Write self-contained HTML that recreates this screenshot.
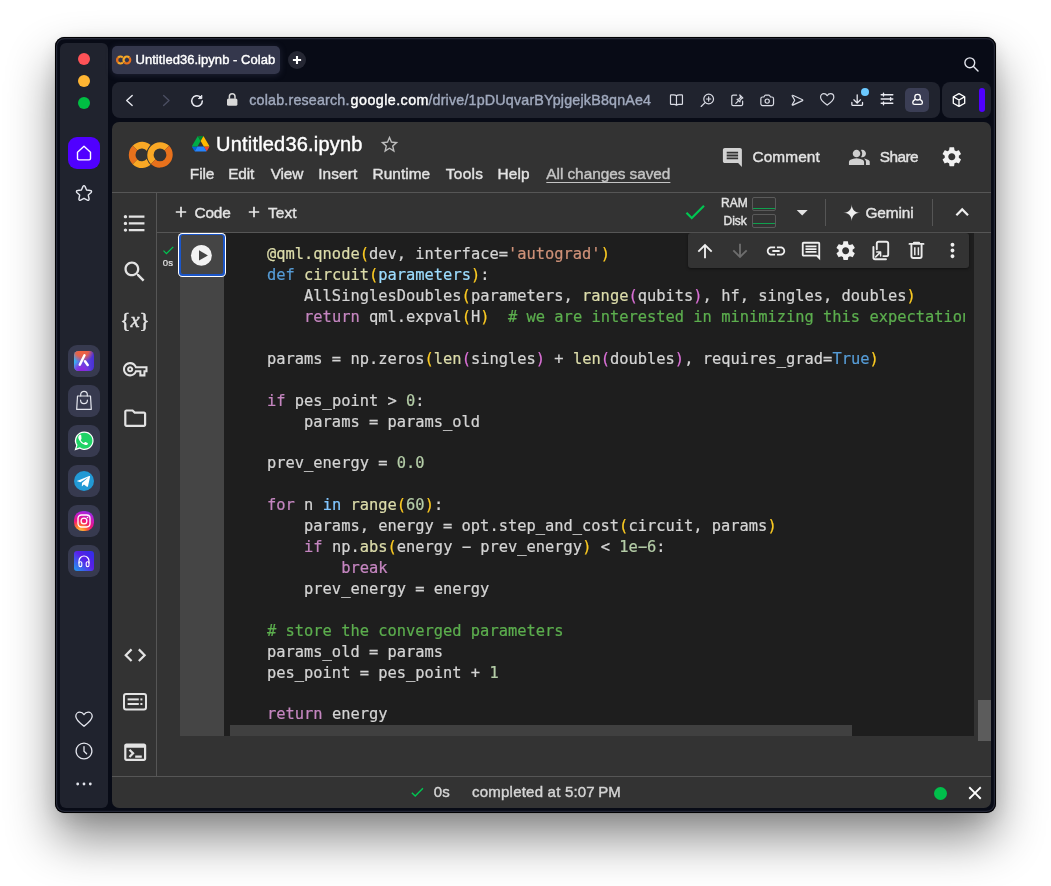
<!DOCTYPE html>
<html><head><meta charset="utf-8"><title>Untitled36.ipynb - Colab</title>
<style>
*{box-sizing:border-box;margin:0;padding:0}
html,body{width:1051px;height:886px;overflow:hidden;background:#fff}
body{position:relative;font-family:"Liberation Sans",sans-serif}
#root{position:absolute;left:0;top:0;width:1051px;height:886px;will-change:transform}
.a{position:absolute}
.t{position:absolute;white-space:pre;line-height:1;-webkit-text-stroke:.4px}
#win{left:55px;top:37px;width:941px;height:775.5px;border-radius:9.5px;background:#080b16;
 box-shadow:inset 0 0 0 1px #010103,inset 0 0 0 2.200px rgba(150,155,185,.200),0 0 1px rgba(0,0,0,.5),0 26px 48px rgba(0,0,0,.45),0 6px 20px rgba(0,0,0,.1)}
#side{left:60px;top:42.500px;width:48px;height:765.500px;border-radius:6px;background:#20232e}
.dot{width:12px;height:12px;border-radius:50%;left:78px}
.app{left:68px;width:32px;height:32px;border-radius:9px;background:#373a4f}
#tab{left:112px;top:46px;width:168px;height:27.500px;border-radius:5px;background:#34374c;box-shadow:0 1px 6px rgba(70,74,105,.380)}
#url{left:112px;top:82px;width:828px;height:36px;border-radius:8px;background:#20232e}
#ext{left:942px;top:82px;width:49px;height:36px;border-radius:8px;background:#20232e}
#page{left:112px;top:122px;width:879px;height:686px;border-radius:7px;background:#333}
svg{position:absolute;overflow:visible}
.ln{height:20.909px;line-height:20.909px;font-family:"DejaVu Sans Mono","Liberation Mono",monospace;font-size:15.4px;white-space:pre;color:#d4d4d4;-webkit-text-stroke:.22px}
.f{color:#dcdcaa}.g{color:#fccb22}.m{color:#da70d6}.d{color:#d4d4d4}.s{color:#ce9178}.k{color:#569cd6}.p{color:#9cdcfe}.c{color:#c586c0}.cm{color:#5cae4e}.i{color:#82c6ff}.n{color:#b5cea8}
</style></head><body><div id="root">
<div id="win" class="a"></div>
<div id="side" class="a"></div>
<div class="a dot" style="top:53px;background:#fe5257"></div>
<div class="a dot" style="top:75px;background:#feb533"></div>
<div class="a dot" style="top:97px;background:#00bf43"></div>
<div id="tab" class="a"></div>
<div id="url" class="a"></div>
<div id="ext" class="a"></div>
<div id="page" class="a"></div>
<!-- browser sidebar -->
<div class="a" style="left:68px;top:137px;width:32px;height:32px;border-radius:9px;background:#5000ff"></div>
<svg style="left:74px;top:143px" width="20" height="20" viewBox="0 0 20 20" fill="none" stroke="#fff" stroke-width="1.4" stroke-linejoin="round"><path d="M3.5 9.2 10 3.2l6.5 6v6.3a1.4 1.4 0 0 1-1.4 1.4H4.9a1.4 1.4 0 0 1-1.4-1.4z"/></svg>
<svg style="left:74px;top:183px" width="20" height="20" viewBox="0 0 20 20" fill="none" stroke="#e4e6ee" stroke-width="1.4" stroke-linejoin="round"><path d="M10 2.6c.5 0 .8.3 1 .8l1.6 3.6 3.9.5c1 .1 1.400 1.200.7 1.900l-2.900 2.700.8 3.900c.2 1-.8 1.700-1.700 1.200L10 15.300l-3.400 1.900c-.9.5-1.900-.2-1.700-1.200l.8-3.900-2.900-2.700c-.7-.7-.3-1.800.7-1.900L7.400 7 9 3.400c.2-.5.500-.8 1-.8z"/></svg>
<div class="a app" style="top:345px"></div>
<div class="a app" style="top:385px"></div>
<div class="a app" style="top:425px"></div>
<div class="a app" style="top:465px"></div>
<div class="a app" style="top:505px"></div>
<div class="a app" style="top:545px"></div>
<!-- app 1: aria -->
<svg style="left:74px;top:351px" width="20" height="20" viewBox="0 0 20 20"><defs><linearGradient id="ga" x1="0" y1="0.500" x2="1" y2="0.500"><stop offset="0" stop-color="#38b8f0"/><stop offset=".38" stop-color="#6257e4"/><stop offset="1" stop-color="#4a2fd4"/></linearGradient><radialGradient id="gb" cx=".4" cy="-.05" r=".62"><stop offset="0" stop-color="#f6643a"/><stop offset=".55" stop-color="#f0603e" stop-opacity=".9"/><stop offset="1" stop-color="#e85a60" stop-opacity="0"/></radialGradient><radialGradient id="gc" cx=".35" cy="1.050" r=".55"><stop offset="0" stop-color="#8f22da"/><stop offset=".5" stop-color="#8a2be0" stop-opacity=".8"/><stop offset="1" stop-color="#8a2be0" stop-opacity="0"/></radialGradient></defs><rect width="20" height="20" rx="4.500" fill="url(#ga)"/><rect width="20" height="20" rx="4.500" fill="url(#gc)"/><rect width="20" height="20" rx="4.500" fill="url(#gb)"/><path d="M10.500 4.300 5.800 13.700" stroke="#fff" stroke-width="2.500" stroke-linecap="round"/><path d="M11 10.300 13.700 14" stroke="#fff" stroke-width="2.500" stroke-linecap="round"/></svg>
<!-- app 2: bag -->
<svg style="left:74px;top:391px" width="20" height="20" viewBox="0 0 20 20" fill="none" stroke="#e4e6ee" stroke-width="1.200" stroke-linejoin="round" stroke-linecap="round"><path d="M3.500 5h13l.8 13.400H2.700z"/><path d="M6.700 5V3.600a3.300 3.300 0 0 1 6.600 0V5"/><path d="M6.600 9.200a3.400 3.400 0 0 0 6.800 0"/></svg>
<!-- app 3: whatsapp -->
<svg style="left:73px;top:430px" width="22" height="22" viewBox="0 0 22 22"><path d="M11.200 1.400a9.300 9.300 0 0 0-8 14l-1.700 5 5.200-1.600a9.300 9.300 0 1 0 4.500-17.400z" fill="#fff"/><path d="M11.200 2.700a8 8 0 0 0-6.700 12.400l-1.100 3.300 3.500-1.100a8 8 0 1 0 4.300-14.600z" fill="#1fd366"/><path d="M8.100 6.300c-.3-.6-.5-.6-.8-.6h-.7c-.2 0-.6.100-.9.500-.3.300-1.200 1.100-1.200 2.800s1.200 3.200 1.400 3.500c.2.200 2.300 3.700 5.800 5 2.900 1.100 3.400.7 4-.1.600-.7.600-1.400.4-1.500-.2-.3-.4-.4-.9-.6l-2-.9c-.3-.1-.6-.2-.8.200l-.8 1c-.2.200-.300.300-.600.100-1.600-.7-2.800-1.900-3.600-3.300-.2-.3 0-.500.100-.600l.6-.7c.2-.2.200-.4.300-.6.100-.200 0-.400 0-.600z" fill="#fff" transform="translate(1.600 .2) scale(.82)"/></svg>
<!-- app 4: telegram -->
<svg style="left:74px;top:471px" width="20" height="20" viewBox="0 0 20 20"><circle cx="10" cy="10" r="10" fill="#2299d5"/><path d="M3.600 9.700 15.200 5c.5-.2 1 .1.800.9l-2 9.300c-.1.700-.5.800-1.100.5l-3-2.200-1.500 1.400c-.2.200-.3.300-.6.300l.2-3.100 5.600-5c.2-.2-.1-.3-.4-.200L6.300 11.200l-2.900-.900c-.6-.2-.6-.6.200-.600z" fill="#fff"/></svg>
<!-- app 5: instagram -->
<svg style="left:74px;top:511px" width="20" height="20" viewBox="0 0 20 20"><defs><radialGradient id="gi" cx=".3" cy="1.050" r="1.200"><stop offset="0" stop-color="#ffd44f"/><stop offset=".25" stop-color="#ff7a2a"/><stop offset=".5" stop-color="#f0147a"/><stop offset=".8" stop-color="#b71fd4"/><stop offset="1" stop-color="#6a3be0"/></radialGradient></defs><rect width="20" height="20" rx="8.800" fill="url(#gi)"/><rect x="4" y="4" width="12" height="12" rx="3.400" fill="none" stroke="#fff" stroke-width="1.300"/><circle cx="10" cy="10" r="2.900" fill="none" stroke="#fff" stroke-width="1.300"/><circle cx="13.500" cy="6.500" r=".8" fill="#fff"/></svg>
<!-- app 6: player -->
<svg style="left:74px;top:551px" width="20" height="20" viewBox="0 0 20 20"><defs><linearGradient id="gp" x1="1" y1="0" x2="0" y2="1"><stop offset="0" stop-color="#2b30e8"/><stop offset=".45" stop-color="#5a1fe8"/><stop offset="1" stop-color="#1fa0f0"/></linearGradient></defs><rect width="20" height="20" rx="3" fill="url(#gp)"/><path d="M5 12.500V10a5 5 0 0 1 10 0v2.500" fill="none" stroke="#fff" stroke-width="1.200"/><rect x="5" y="10.800" width="2.800" height="4.800" rx="1.300" fill="none" stroke="#fff" stroke-width="1.100"/><rect x="12.200" y="10.800" width="2.800" height="4.800" rx="1.300" fill="none" stroke="#fff" stroke-width="1.100"/></svg>
<!-- heart / clock / dots -->
<svg style="left:74px;top:709.300px" width="20" height="20" viewBox="0 0 20 20" fill="none" stroke="#e4e6ee" stroke-width="1.300" stroke-linejoin="round"><path d="M10 17.200C6 14.200 1.800 11.200 1.800 7.300 1.800 5 3.600 3.200 5.800 3.200c1.700 0 3.200.9 4.200 2.400 1-1.500 2.500-2.400 4.200-2.400 2.200 0 4 1.800 4 4.100 0 3.900-4.200 6.900-8.200 9.900z"/></svg>
<svg style="left:73.800px;top:741.400px" width="20" height="20" viewBox="0 0 20 20" fill="none" stroke="#e4e6ee" stroke-width="1.300" stroke-linecap="round"><circle cx="10" cy="10" r="7.900"/><path d="M10 5.600v4.600l2.600 2.600"/></svg>
<svg style="left:74px;top:774px" width="20" height="20" viewBox="0 0 20 20" fill="#e4e6ee"><circle cx="3.700" cy="10" r="1.400"/><circle cx="10" cy="10" r="1.400"/><circle cx="16.300" cy="10" r="1.400"/></svg>
<!-- tab plus / search -->
<div class="a" style="left:288px;top:51px;width:18px;height:18px;border-radius:50%;background:#252733"></div>
<svg style="left:292px;top:55px" width="10" height="10" viewBox="0 0 10 10" stroke="#fff" stroke-width="2.100"><path d="M5 .9v8.200M.9 5h8.200"/></svg>
<svg style="left:962.600px;top:56px" width="16" height="16" viewBox="0 0 16 16" fill="none" stroke="#e4e6ee" stroke-width="1.400" stroke-linecap="round"><circle cx="6.800" cy="6.800" r="4.900"/><path d="M10.500 10.500 15 15"/></svg>
<!-- url bar left -->
<svg style="left:118.600px;top:90px" width="20" height="20" viewBox="0 0 20 20" fill="none" stroke="#e8e9f0" stroke-width="1.400" stroke-linecap="round" stroke-linejoin="round"><path d="M13.200 5.400 7.700 10.400l5.500 5"/></svg>
<svg style="left:156px;top:90px" width="20" height="20" viewBox="0 0 20 20" fill="none" stroke="#4b4e62" stroke-width="1.400" stroke-linecap="round" stroke-linejoin="round"><path d="M7.600 5.600 13 10.500l-5.400 4.900"/></svg>
<svg style="left:187px;top:90.600px" width="20" height="20" viewBox="0 0 20 20" fill="none" stroke="#e8e9f0" stroke-width="1.500" stroke-linecap="round"><path d="M15.300 10a5.300 5.300 0 1 1-1.800-4"/><path d="M14.800 4.600v3h-3z" fill="#e8e9f0" stroke-width="1" stroke-linejoin="round"/></svg>
<svg style="left:222px;top:90px" width="20" height="20" viewBox="0 0 20 20"><rect x="5" y="8.400" width="10.400" height="7.400" rx="1.600" fill="#d9d9d9"/><path d="M7.400 8.800V6.500a2.800 2.800 0 0 1 5.600 0v2.300" fill="none" stroke="#d9d9d9" stroke-width="1.500"/></svg>
<!-- url bar right -->

<svg style="left:667.10px;top:90.80px" width="18.4" height="18.4" viewBox="0 0 20 20" fill="none" stroke="#d9dbe4" stroke-width="1.300" stroke-linejoin="round"><path d="M10.300 5.200v10.200M10.300 5.200c-.8-.7-1.800-1-3-1H4.500a.7.700 0 0 0-.7.700v9c0 .4.300.7.700.7h3.200c1 0 1.900.3 2.600.8.700-.5 1.600-.8 2.600-.8h3.200c.4 0 .7-.3.700-.7v-9a.7.700 0 0 0-.7-.7h-2.800c-1.200 0-2.200.3-3 1z"/></svg>
<svg style="left:697.80px;top:90.80px" width="18.4" height="18.4" viewBox="0 0 20 20" fill="none" stroke="#d9dbe4" stroke-width="1.300" stroke-linecap="round"><circle cx="11.600" cy="8.700" r="5.300"/><path d="M7.700 12.600 3.400 16.800M11.600 6.400v4.600M9.300 8.700h4.600"/></svg>
<svg style="left:727.80px;top:90.80px" width="18.4" height="18.4" viewBox="0 0 20 20" fill="none" stroke="#d9dbe4" stroke-width="1.300" stroke-linecap="round" stroke-linejoin="round"><path d="M9.400 4.400H5.600a1.500 1.500 0 0 0-1.500 1.500v8.400a1.500 1.500 0 0 0 1.500 1.500h8.800a1.500 1.500 0 0 0 1.500-1.500v-3.200"/><path d="M12.800 4.300l3.300 3.300-1.100.4-1.800 1.900-.3 2-1.400-1.400-3 3 3-3-1.600-1.500 2-.3 1.900-1.900z"/></svg>
<svg style="left:757.80px;top:90.80px" width="18.4" height="18.4" viewBox="0 0 20 20" fill="none" stroke="#d9dbe4" stroke-width="1.300" stroke-linejoin="round"><path d="M3.100 8.300c0-1 .8-1.800 1.800-1.800h1.500l1-1.600c.2-.3.500-.5.900-.5h3.400c.4 0 .7.200.9.500l1 1.600h1.500c1 0 1.800.8 1.800 1.800v5.700c0 1-.8 1.800-1.800 1.800H4.900c-1 0-1.800-.8-1.800-1.800z"/><circle cx="10" cy="11" r="2.300"/></svg>
<svg style="left:787.80px;top:90.80px" width="18.4" height="18.4" viewBox="0 0 20 20" fill="none" stroke="#d9dbe4" stroke-width="1.300" stroke-linejoin="round"><path d="M5.200 4.700 15.800 9.600c.4.200.4.700 0 .900L5.200 15.400c-.4.200-.8-.2-.6-.6L7.300 10 4.600 5.300c-.2-.4.200-.8.600-.6z"/></svg>
<svg style="left:818.00px;top:90.20px" width="18.4" height="18.4" viewBox="0 0 20 20" fill="none" stroke="#d9dbe4" stroke-width="1.300" stroke-linejoin="round"><path d="M10 16.400C6.500 13.800 2.800 11.200 2.800 7.800 2.800 5.700 4.400 4 6.400 4c1.500 0 2.800.8 3.600 2.200C10.800 4.800 12.100 4 13.600 4c2 0 3.600 1.700 3.600 3.800 0 3.400-3.700 6-7.200 8.600z"/></svg>
<svg style="left:847.90px;top:90.80px" width="18.4" height="18.4" viewBox="0 0 20 20" fill="none" stroke="#e8e9f0" stroke-width="1.400" stroke-linecap="round" stroke-linejoin="round"><path d="M10 4.200v8.800M6.400 9.600 10 13.200l3.600-3.600M4.200 12.400v2.200c0 .6.500 1.100 1.100 1.100h9.400c.6 0 1.100-.5 1.100-1.100v-2.200"/></svg>
<div class="a" style="left:861px;top:88.300px;width:8px;height:8px;border-radius:50%;background:#6cc9ff"></div>
<svg style="left:877.100px;top:89.400px" width="20" height="20" viewBox="0 0 20 20" fill="none" stroke="#e8e9f0" stroke-width="1.400" stroke-linecap="round"><path d="M4.200 5.700h11.600M4.200 10h11.600M4.200 14.300h11.600M6.500 4.300v2.800M13.600 8.600v2.800M6.500 12.900v2.800"/></svg>
<div class="a" style="left:905px;top:88px;width:24px;height:24px;border-radius:5px;background:#3b3e55"></div>
<svg style="left:908.600px;top:91.200px" width="17" height="17" viewBox="0 0 20 20" fill="none" stroke="#fff" stroke-width="1.500" stroke-linejoin="round"><circle cx="10.100" cy="7.300" r="3.300"/><path d="M7.600 9.900c-2 .8-3.200 2.300-3.200 3.900 0 1.200 1 1.900 2.300 1.900h6.800c1.300 0 2.300-.7 2.300-1.900 0-1.600-1.200-3.100-3.200-3.900"/></svg>
<svg style="left:948.600px;top:90.300px" width="20" height="20" viewBox="0 0 20 20" fill="none" stroke="#fff" stroke-width="1.300" stroke-linejoin="round"><path d="M10 3.600 15.700 6.800v6.400L10 16.400 4.300 13.200V6.800zM4.500 6.900 10 10l5.500-3.100M10 10v6.200"/></svg>
<div class="a" style="left:979px;top:88px;width:6px;height:24px;border-radius:3px;background:#5000ff"></div>

<div class="a" style="left:112px;top:192px;width:879px;height:1px;background:#565656;"></div>
<div class="a" style="left:156px;top:232px;width:835px;height:1px;background:#565656;"></div>
<div class="a" style="left:156px;top:193px;width:1px;height:583px;background:#565656;"></div>
<div class="a" style="left:112px;top:776px;width:879px;height:1px;background:#565656;"></div>
<div class="a" style="left:180px;top:233px;width:44px;height:503px;background:#454545;"></div>
<div class="a" id="code" style="left:224px;top:233px;width:750px;height:503px;background:#1e1e1e;overflow:hidden">
<div class="a" id="codetxt" style="left:43px;top:11.4px;width:698px;overflow:hidden">
<div class="ln"><span class="f">@qml.qnode</span><span class="g">(</span><span class="d">dev, interface=</span><span class="s">'autograd'</span><span class="g">)</span></div>
<div class="ln"><span class="k">def</span><span class="d"> </span><span class="f">circuit</span><span class="g">(</span><span class="p">parameters</span><span class="g">)</span><span class="d">:</span></div>
<div class="ln"><span class="d">    AllSinglesDoubles</span><span class="g">(</span><span class="d">parameters, </span><span class="f">range</span><span class="m">(</span><span class="d">qubits</span><span class="m">)</span><span class="d">, hf, singles, doubles</span><span class="g">)</span></div>
<div class="ln"><span class="d">    </span><span class="c">return</span><span class="d"> qml.expval</span><span class="g">(</span><span class="d">H</span><span class="g">)</span><span class="d">  </span><span class="cm"># we are interested in minimizing this expectation value</span></div>
<div class="ln"></div>
<div class="ln"><span class="d">params = np.zeros</span><span class="g">(</span><span class="f">len</span><span class="m">(</span><span class="d">singles</span><span class="m">)</span><span class="d"> + </span><span class="f">len</span><span class="m">(</span><span class="d">doubles</span><span class="m">)</span><span class="d">, requires_grad=</span><span class="k">True</span><span class="g">)</span></div>
<div class="ln"></div>
<div class="ln"><span class="c">if</span><span class="d"> pes_point &gt; </span><span class="n">0</span><span class="d">:</span></div>
<div class="ln"><span class="d">    params = params_old</span></div>
<div class="ln"></div>
<div class="ln"><span class="d">prev_energy = </span><span class="n">0.0</span></div>
<div class="ln"></div>
<div class="ln"><span class="c">for</span><span class="d"> n </span><span class="i">in</span><span class="d"> </span><span class="f">range</span><span class="g">(</span><span class="n">60</span><span class="g">)</span><span class="d">:</span></div>
<div class="ln"><span class="d">    params, energy = opt.step_and_cost</span><span class="g">(</span><span class="d">circuit, params</span><span class="g">)</span></div>
<div class="ln"><span class="d">    </span><span class="c">if</span><span class="d"> np.</span><span class="f">abs</span><span class="g">(</span><span class="d">energy − prev_energy</span><span class="g">)</span><span class="d"> &lt; </span><span class="n">1e−6</span><span class="d">:</span></div>
<div class="ln"><span class="d">        </span><span class="c">break</span></div>
<div class="ln"><span class="d">    prev_energy = energy</span></div>
<div class="ln"></div>
<div class="ln"><span class="cm"># store the converged parameters</span></div>
<div class="ln"><span class="d">params_old = params</span></div>
<div class="ln"><span class="d">pes_point = pes_point + </span><span class="n">1</span></div>
<div class="ln"></div>
<div class="ln"><span class="c">return</span><span class="d"> energy</span></div>
</div>
<div class="a" style="left:6px;top:492px;width:622px;height:11px;background:#404040"></div>
</div>
<div class="a" style="left:978px;top:700px;width:13px;height:41px;background:#5c5c5c;"></div>
<div class="a" style="left:688px;top:233.2px;width:281px;height:34.8px;background:#333;border-radius:3px;box-shadow:0 1px 3px rgba(0,0,0,.450)"></div>
<div class="a" style="left:178px;top:232.5px;width:48px;height:44.3px;background:#fff;border-radius:4.5px"></div>
<div class="a" style="left:179px;top:233.5px;width:46px;height:42.3px;background:#1b56c9;border-radius:3.5px"></div>
<div class="a" style="left:180.6px;top:235.1px;width:42.8px;height:39.1px;background:#454545;border-radius:2px"></div>
<svg style="left:190px;top:244px" width="23" height="23" viewBox="190 244 23 23"><circle cx="201.400" cy="255.400" r="10.450" fill="#f2f2f2"/><path d="M199 250.300 207.900 255.400 199 260.400z" fill="#444"/></svg>
<svg style="left:160.75px;top:242.75px" width="14.50" height="14.50" viewBox="0 0 24 24" ><path fill="#00c752" d="M9 16.17L4.83 12l-1.42 1.41L9 19 21 7l-1.41-1.41z"/></svg>
<svg style="left:121.10px;top:210.10px" width="26.80" height="26.80" viewBox="0 0 24 24" ><path fill="#e3e3e3" d="M4 10.5c-.83 0-1.5.67-1.5 1.5s.67 1.5 1.5 1.5 1.5-.67 1.5-1.5-.67-1.5-1.5-1.5zm0-6c-.83 0-1.5.67-1.5 1.5S3.17 7.5 4 7.5 5.5 6.83 5.5 6 4.83 4.5 4 4.5zm0 12c-.83 0-1.5.68-1.5 1.5s.68 1.5 1.5 1.5 1.5-.68 1.5-1.5-.67-1.5-1.5-1.5zM7 19h14v-2H7v2zm0-6h14v-2H7v2zm0-8v2h14V5H7z"/></svg>
<svg style="left:121.25px;top:258.25px" width="27.50" height="27.50" viewBox="0 0 24 24" ><path fill="#e3e3e3" d="M15.5 14h-.79l-.28-.27C15.41 12.59 16 11.11 16 9.5 16 5.91 13.09 3 9.5 3S3 5.91 3 9.5 5.91 16 9.5 16c1.61 0 3.09-.59 4.23-1.57l.27.28v.79l5 4.99L20.49 19l-4.99-5zm-6 0C7.01 14 5 11.99 5 9.5S7.01 5 9.5 5 14 7.01 14 9.5 11.99 14 9.5 14z"/></svg>
<svg style="left:122.75px;top:356.75px" width="24.50" height="24.50" viewBox="0 0 24 24" ><path fill="#e3e3e3" d="M22 19h-6v-4h-2.68c-1.14 2.42-3.6 4-6.32 4-3.86 0-7-3.14-7-7s3.14-7 7-7c2.72 0 5.17 1.58 6.32 4H24v6h-2v4zm-4-2h2v-4h2v-2H11.94l-.23-.67C11.01 8.34 9.11 7 7 7c-2.76 0-5 2.24-5 5s2.24 5 5 5c2.11 0 4.01-1.34 4.71-3.33l.23-.67H18v4zM7 15c-1.65 0-3-1.35-3-3s1.35-3 3-3 3 1.35 3 3-1.35 3-3 3zm0-4c-.55 0-1 .45-1 1s.45 1 1 1 1-.45 1-1-.45-1-1-1z"/></svg>
<svg style="left:121.80px;top:404.80px" width="26.40" height="26.40" viewBox="0 0 24 24" ><path fill="#e3e3e3" d="M9.17 6l2 2H20v10H4V6h5.17M10 4H4c-1.1 0-1.99.9-1.99 2L2 18c0 1.1.9 2 2 2h16c1.1 0 2-.9 2-2V8c0-1.1-.9-2-2-2h-8l-2-2z"/></svg>
<svg style="left:121.80px;top:641.50px" width="26.40" height="26.40" viewBox="0 0 24 24" ><path fill="#e3e3e3" d="M9.4 16.6L4.8 12l4.6-4.6L8 6l-6 6 6 6 1.4-1.4zm5.2 0l4.6-4.6-4.6-4.6L16 6l6 6-6 6-1.4-1.4z"/></svg>
<svg style="left:121.80px;top:738.50px" width="26.40" height="26.40" viewBox="0 0 24 24" ><path fill="#e3e3e3" d="M20 4H4c-1.11 0-2 .9-2 2v12c0 1.1.89 2 2 2h16c1.1 0 2-.9 2-2V6c0-1.1-.89-2-2-2zm0 14H4V8h16v10zm-2-1h-6v-2h6v2zM7.5 17l-1.41-1.41L8.67 13l-2.59-2.59L7.5 9l4 4-4 4z"/></svg>
<svg style="left:120px;top:306px" width="30" height="30" viewBox="0 0 30 30"><text x="15" y="20.800" text-anchor="middle" font-family="Liberation Serif,serif" font-size="21" fill="#e3e3e3" stroke="#e3e3e3" stroke-width=".45">{<tspan font-style="italic" font-size="20.500">x</tspan>}</text></svg>
<svg style="left:123px;top:693.4px" width="24" height="17.4" viewBox="0 0 24 17.4"><rect x="1" y="1" width="22" height="15.4" rx="2" fill="none" stroke="#e3e3e3" stroke-width="2"/><rect x="4.6" y="5.4" width="11.2" height="2" fill="#e3e3e3"/><rect x="4.6" y="10" width="11.2" height="2" fill="#e3e3e3"/><rect x="17.4" y="5.4" width="2" height="2" fill="#e3e3e3"/><rect x="17.4" y="10" width="2" height="2" fill="#e3e3e3"/></svg>
<svg style="left:379.10px;top:133.80px" width="21.00" height="21.00" viewBox="0 0 24 24" ><path fill="#bdbdbd" d="M22 9.24l-7.19-.62L12 2 9.19 8.63 2 9.24l5.46 4.73L5.82 21 12 17.27 18.18 21l-1.63-7.03L22 9.24zM12 15.4l-3.76 2.27 1-4.28-3.32-2.88 4.38-.38L12 6.1l1.71 4.04 4.38.38-3.32 2.88 1 4.28L12 15.4z"/></svg>
<svg style="left:721.20px;top:145.70px" width="22.80" height="22.80" viewBox="0 0 24 24" ><path fill="#d2d2d2" d="M21.99 4c0-1.1-.89-2-1.99-2H4c-1.1 0-2 .9-2 2v12c0 1.1.9 2 2 2h14l4 4-.01-18zM18 14H6v-2h12v2zm0-3H6V9h12v2zm0-3H6V6h12v2z"/></svg>
<svg style="left:848.25px;top:145.65px" width="22.70" height="22.70" viewBox="0 0 24 24" ><path fill="#d0d0d0" d="M1 20v-2.800q0-.850.438-1.563T2.600 14.550q1.550-.775 3.150-1.163T9 13q1.650 0 3.250.388t3.150 1.162q.725.375 1.163 1.088T17 17.200V20zm18 0v-3q0-1.100-.612-2.113T16.650 13.150q1.275.150 2.400.513t2.100.887q.900.500 1.375 1.113T23 17v3zM9 12q-1.650 0-2.825-1.175T5 8t1.175-2.825T9 4t2.825 1.175T13 8t-1.175 2.825T9 12m10-4q0 1.650-1.175 2.825T15 12q-.275 0-.700-.062t-.700-.138q.675-.800 1.038-1.775T15 8t-.362-2.025T13.600 4.200q.350-.125.700-.163T15 4q1.650 0 2.825 1.175T19 8"/></svg>
<svg style="left:939.90px;top:145.10px" width="23.60" height="23.60" viewBox="0 0 24 24" ><path fill="#f1f1f1" d="M19.14 12.94c.04-.3.06-.61.06-.94 0-.32-.02-.64-.07-.94l2.03-1.58c.18-.14.23-.41.12-.61l-1.92-3.32c-.12-.22-.37-.29-.59-.22l-2.39.96c-.5-.38-1.03-.7-1.62-.94l-.36-2.54c-.04-.24-.24-.41-.48-.41h-3.84c-.24 0-.43.17-.47.41l-.36 2.54c-.59.24-1.13.57-1.62.94l-2.39-.96c-.22-.08-.47 0-.59.22L2.74 8.87c-.12.21-.08.47.12.61l2.03 1.58c-.05.3-.09.63-.09.94s.02.64.07.94l-2.03 1.58c-.18.14-.23.41-.12.61l1.92 3.32c.12.22.37.29.59.22l2.39-.96c.5.38 1.03.7 1.62.94l.36 2.54c.05.24.24.41.48.41h3.84c.24 0 .44-.17.47-.41l.36-2.54c.59-.24 1.13-.56 1.62-.94l2.39.96c.22.08.47 0 .59-.22l1.92-3.32c.12-.22.07-.47-.12-.61l-2.01-1.58zM12 15.6c-1.98 0-3.6-1.62-3.6-3.6s1.62-3.6 3.6-3.6 3.6 1.62 3.6 3.6-1.62 3.6-3.6 3.6z"/></svg>
<svg style="left:175.1px;top:206px" width="12" height="12" viewBox="0 0 12 12" stroke="#e8e8e8" stroke-width="1.700"><path d="M6 .8v10.400M.8 6h10.400"/></svg>
<svg style="left:247.7px;top:206px" width="12" height="12" viewBox="0 0 12 12" stroke="#e8e8e8" stroke-width="1.700"><path d="M6 .8v10.400M.8 6h10.400"/></svg>
<svg style="left:681.50px;top:198.50px" width="26.00" height="26.00" viewBox="0 0 24 24" ><path fill="#00c752" d="M9 16.17L4.83 12l-1.42 1.41L9 19 21 7l-1.41-1.41z"/></svg>
<svg style="left:788.80px;top:198.80px" width="26.40" height="26.40" viewBox="0 0 24 24" ><path fill="#e3e3e3" d="M7 10l5 5 5-5z"/></svg>
<svg style="left:841.55px;top:202.85px" width="19.50" height="19.50" viewBox="0 0 24 24" ><path fill="#efefef" d="M12 1.5C12 8 16 12 22.5 12 16 12 12 16 12 22.5 12 16 8 12 1.5 12 8 12 12 8 12 1.5z"/></svg>
<svg style="left:948.90px;top:198.80px" width="26.40" height="26.40" viewBox="0 0 24 24" ><path fill="#efefef" d="M12 8l-6 6 1.41 1.41L12 10.83l4.59 4.58L18 14z"/></svg>
<div class="a" style="left:825px;top:199px;width:1px;height:27px;background:#555;"></div>
<div class="a" style="left:932px;top:199px;width:1px;height:27px;background:#555;"></div>
<div class="a" style="left:752px;top:197.2px;width:24px;height:13.4px;border:1px solid #5a5a5a;border-radius:2px"></div>
<div class="a" style="left:753.2px;top:208px;width:21.6px;height:1.2px;background:#10a04e;"></div>
<div class="a" style="left:752px;top:214.4px;width:24px;height:13.2px;border:1px solid #5a5a5a;border-radius:2px"></div>
<div class="a" style="left:753.2px;top:222.9px;width:21.6px;height:1.2px;background:#10a04e;"></div>
<svg style="left:694.30px;top:239.80px" width="22.00" height="22.00" viewBox="0 0 24 24" ><path fill="#f0f0f0" d="M4 12l1.41 1.41L11 7.83V20h2V7.83l5.58 5.59L20 12l-8-8-8 8z"/></svg>
<svg style="left:729.30px;top:239.80px" width="22.00" height="22.00" viewBox="0 0 24 24" ><path fill="#6e6e6e" d="M20 12l-1.41-1.41L13 16.17V4h-2v12.17l-5.58-5.59L4 12l8 8 8-8z"/></svg>
<svg style="left:765.00px;top:239.80px" width="22.00" height="22.00" viewBox="0 0 24 24" ><path fill="#f0f0f0" d="M3.9 12c0-1.71 1.39-3.1 3.1-3.1h4V7H7c-2.76 0-5 2.24-5 5s2.24 5 5 5h4v-1.9H7c-1.71 0-3.1-1.39-3.1-3.1zM8 13h8v-2H8v2zm9-6h-4v1.9h4c1.71 0 3.1 1.39 3.1 3.1s-1.39 3.1-3.1 3.1h-4V17h4c2.76 0 5-2.24 5-5s-2.24-5-5-5z"/></svg>
<svg style="left:800.00px;top:239.80px" width="22.00" height="22.00" viewBox="0 0 24 24" ><path fill="#f0f0f0" d="M21.99 4c0-1.1-.89-2-1.99-2H4c-1.1 0-2 .9-2 2v12c0 1.1.9 2 2 2h14l4 4-.01-18zM20 4v13.17L18.83 16H4V4h16zM6 12h12v2H6zm0-3h12v2H6zm0-3h12v2H6z"/></svg>
<svg style="left:834.35px;top:239.15px" width="23.30" height="23.30" viewBox="0 0 24 24" ><path fill="#f0f0f0" d="M19.14 12.94c.04-.3.06-.61.06-.94 0-.32-.02-.64-.07-.94l2.03-1.58c.18-.14.23-.41.12-.61l-1.92-3.32c-.12-.22-.37-.29-.59-.22l-2.39.96c-.5-.38-1.03-.7-1.62-.94l-.36-2.54c-.04-.24-.24-.41-.48-.41h-3.84c-.24 0-.43.17-.47.41l-.36 2.54c-.59.24-1.13.57-1.62.94l-2.39-.96c-.22-.08-.47 0-.59.22L2.74 8.87c-.12.21-.08.47.12.61l2.03 1.58c-.05.3-.09.63-.09.94s.02.64.07.94l-2.03 1.58c-.18.14-.23.41-.12.61l1.92 3.32c.12.22.37.29.59.22l2.39-.96c.5.38 1.03.7 1.62.94l.36 2.54c.05.24.24.41.48.41h3.84c.24 0 .44-.17.47-.41l.36-2.54c.59-.24 1.13-.56 1.62-.94l2.39.96c.22.08.47 0 .59-.22l1.92-3.32c.12-.22.07-.47-.12-.61l-2.01-1.58zM12 15.6c-1.98 0-3.6-1.62-3.6-3.6s1.62-3.6 3.6-3.6 3.6 1.62 3.6 3.6-1.62 3.6-3.6 3.6z"/></svg>
<svg style="left:940.50px;top:239.30px" width="23.00" height="23.00" viewBox="0 0 24 24" ><path fill="#f0f0f0" d="M12 8c1.1 0 2-.9 2-2s-.9-2-2-2-2 .9-2 2 .9 2 2 2zm0 2c-1.1 0-2 .9-2 2s.9 2 2 2 2-.9 2-2-.9-2-2-2zm0 6c-1.1 0-2 .9-2 2s.9 2 2 2 2-.9 2-2-.9-2-2-2z"/></svg>
<svg style="left:868px;top:236px" width="60" height="30" viewBox="868 236 60 30" fill="none" stroke="#ebebeb" stroke-width="1.900" stroke-linecap="round" stroke-linejoin="round"><path d="M876.8 249.3V243.4a1.7 1.7 0 0 1 1.7-1.7h8a1.7 1.7 0 0 1 1.7 1.7v11a1.7 1.7 0 0 1-1.7 1.700h-3.200"/><path d="M873.400 247V257.500a1.700 1.700 0 0 0 1.700 1.700H886"/><path d="M875.700 256.900 880.200 252.400M876.700 252h3.900v3.900" stroke-width="1.500"/><path d="M909.500 243.900H923.500M913.900 242.700h5.200"/><path d="M911.400 244.700V256.300a1.700 1.700 0 0 0 1.700 1.700h6.800a1.700 1.700 0 0 0 1.700-1.700V244.700"/><path d="M914.800 247.200V255.200M918.400 247.200V255.200" stroke-width="1.500" stroke-linecap="butt"/></svg>
<svg style="left:408.75px;top:783.75px" width="16.50" height="16.50" viewBox="0 0 24 24" ><path fill="#00c752" d="M9 16.17L4.83 12l-1.42 1.41L9 19 21 7l-1.41-1.41z"/></svg>
<div class="a" style="left:934px;top:786.5px;width:13px;height:13px;border-radius:50%;background:#00bf4b"></div>
<svg style="left:964.30px;top:782.00px" width="22.00" height="22.00" viewBox="0 0 24 24" ><path fill="#fff" d="M19 6.41L17.59 5 12 10.59 6.41 5 5 6.41 10.59 12 5 17.59 6.41 19 12 13.41 17.59 19 19 17.59 13.41 12z"/></svg>
<svg style="left:0;top:0" width="1051" height="886" viewBox="0 0 1051 886"><path d="M152.22 146.83A13.10 13.10 0 0 0 132.64 145.64L137.37 150.37A6.40 6.40 0 0 1 146.94 150.96Z" fill="#f9a825"/><path d="M132.64 145.64A13.10 13.10 0 0 0 132.64 164.16L137.37 159.43A6.40 6.40 0 0 1 137.37 150.37Z" fill="#e8711c"/><path d="M132.64 164.16A13.10 13.10 0 0 0 152.22 162.97L146.94 158.84A6.40 6.40 0 0 1 137.37 159.43Z" fill="#f9a825"/><circle cx="160" cy="154.9" r="13.7" fill="#333"/><path d="M169.12 145.78A12.90 12.90 0 0 0 150.88 164.02L155.47 159.43A6.40 6.40 0 0 1 164.53 150.37Z" fill="#f9a825"/><path d="M150.88 164.02A12.90 12.90 0 0 0 169.12 145.78L164.53 150.37A6.40 6.40 0 0 1 155.47 159.43Z" fill="#e8711c"/></svg>
<svg style="left:0;top:0" width="1051" height="886" viewBox="0 0 1051 886"><g transform="translate(123.7 60) scale(0.3508) translate(-150.95 -154.9)"><path d="M152.22 146.83A13.10 13.10 0 0 0 132.64 145.64L137.37 150.37A6.40 6.40 0 0 1 146.94 150.96Z" fill="#f9a825"/><path d="M132.64 145.64A13.10 13.10 0 0 0 132.64 164.16L137.37 159.43A6.40 6.40 0 0 1 137.37 150.37Z" fill="#e8711c"/><path d="M132.64 164.16A13.10 13.10 0 0 0 152.22 162.97L146.94 158.84A6.40 6.40 0 0 1 137.37 159.43Z" fill="#f9a825"/><circle cx="160" cy="154.9" r="13.7" fill="#34374c"/><path d="M169.12 145.78A12.90 12.90 0 0 0 150.88 164.02L155.47 159.43A6.40 6.40 0 0 1 164.53 150.37Z" fill="#f9a825"/><path d="M150.88 164.02A12.90 12.90 0 0 0 169.12 145.78L164.53 150.37A6.40 6.40 0 0 1 155.47 159.43Z" fill="#e8711c"/></g></svg>
<svg style="left:191.8px;top:135.6px" width="17.3" height="15.46" viewBox="0 0 87.3 78"><path d="m6.6 66.85 3.85 6.65c.8 1.4 1.95 2.5 3.3 3.3l13.75-23.8h-27.5c0 1.55.4 3.1 1.2 4.5z" fill="#0066da"/><path d="m43.65 25-13.750-23.800c-1.350.8-2.500 1.900-3.300 3.300l-25.400 44a9.060 9.060 0 0 0 -1.200 4.500h27.500z" fill="#00ac47"/><path d="m73.55 76.800c1.350-.8 2.500-1.900 3.300-3.300l1.600-2.750 7.650-13.250c.8-1.400 1.200-2.950 1.200-4.500h-27.502l5.852 11.500z" fill="#ea4335"/><path d="m43.65 25 13.750-23.800c-1.350-.8-2.900-1.200-4.500-1.200h-18.500c-1.600 0-3.150.45-4.500 1.200z" fill="#00832d"/><path d="m59.8 53h-32.300l-13.750 23.800c1.350.8 2.900 1.200 4.500 1.200h50.800c1.600 0 3.150-.45 4.500-1.200z" fill="#2684fc"/><path d="m73.4 26.500-12.700-22c-.8-1.400-1.950-2.500-3.300-3.300l-13.750 23.800 16.150 28h27.450c0-1.550-.4-3.100-1.200-4.500z" fill="#ffba00"/></svg>

<span class="t" id="tabt" style="left:135.50px;top:53.30px;font-size:13px;color:#fff;letter-spacing:0.043px;">Untitled36.ipynb - Colab</span>
<span class="t" id="u1" style="left:249.30px;top:92.90px;font-size:14.3px;color:#a0a9bd;letter-spacing:0.171px;">colab.research.</span>
<span class="t" id="u2" style="left:350.60px;top:92.90px;font-size:14.3px;color:#fff;letter-spacing:0.444px;">google.com</span>
<span class="t" id="u3" style="left:428.40px;top:92.90px;font-size:14.3px;color:#a0a9bd;letter-spacing:0.179px;">/drive/1pDUqvarBYpjgejkB8qnAe4</span>
<span class="t" id="title" style="left:216.10px;top:134.07px;font-size:20px;color:#fff;letter-spacing:0.187px;">Untitled36.ipynb</span>
<span class="t" id="m1" style="left:189.80px;top:166.36px;font-size:15.4px;color:#e3e3e3;letter-spacing:-0.067px;">File</span>
<span class="t" id="m2" style="left:228.30px;top:166.36px;font-size:15.4px;color:#e3e3e3;letter-spacing:-0.200px;">Edit</span>
<span class="t" id="m3" style="left:270.70px;top:166.36px;font-size:15.4px;color:#e3e3e3;letter-spacing:-0.133px;">View</span>
<span class="t" id="m4" style="left:318.20px;top:166.36px;font-size:15.4px;color:#e3e3e3;letter-spacing:0.120px;">Insert</span>
<span class="t" id="m5" style="left:372.60px;top:166.36px;font-size:15.4px;color:#e3e3e3;letter-spacing:0.033px;">Runtime</span>
<span class="t" id="m6" style="left:445.70px;top:166.36px;font-size:15.4px;color:#e3e3e3;letter-spacing:0.350px;">Tools</span>
<span class="t" id="m7" style="left:497.50px;top:166.36px;font-size:15.4px;color:#e3e3e3;letter-spacing:0.133px;">Help</span>
<span class="t" id="m8" style="left:546.30px;top:166.36px;font-size:15.4px;color:#c4c4c4;letter-spacing:-0.050px;text-decoration:underline;text-underline-offset:3px;text-decoration-thickness:1px">All changes saved</span>
<span class="t" id="bcode" style="left:194.60px;top:204.96px;font-size:15.4px;color:#e3e3e3;letter-spacing:-0.200px;">Code</span>
<span class="t" id="btext" style="left:268.00px;top:204.96px;font-size:15.4px;color:#e3e3e3;letter-spacing:0.067px;">Text</span>
<span class="t" id="comment" style="left:752.50px;top:149.46px;font-size:15.4px;color:#e3e3e3;letter-spacing:0.100px;">Comment</span>
<span class="t" id="share" style="left:879.70px;top:149.46px;font-size:15.4px;color:#e3e3e3;letter-spacing:-0.550px;">Share</span>
<span class="t" id="ram" style="left:720.90px;top:197.44px;font-size:12px;color:#e3e3e3;letter-spacing:0.100px;">RAM</span>
<span class="t" id="disk" style="left:723.50px;top:215.14px;font-size:12px;color:#e3e3e3;letter-spacing:0.000px;">Disk</span>
<span class="t" id="gemini" style="left:865.50px;top:204.96px;font-size:15.4px;color:#e3e3e3;letter-spacing:-0.120px;">Gemini</span>
<span class="t" id="zs" style="left:162.80px;top:257.67px;font-size:9.6px;color:#e3e3e3;letter-spacing:0.200px;-webkit-text-stroke:.2px">0s</span>
<span class="t" id="st1" style="left:433.80px;top:784.00px;font-size:15px;color:#d5d5d5;letter-spacing:0.200px;">0s</span>
<span class="t" id="st2" style="left:472.10px;top:784.00px;font-size:15px;color:#d5d5d5;letter-spacing:0.211px;">completed at 5:07 PM</span>
</div></body></html>
